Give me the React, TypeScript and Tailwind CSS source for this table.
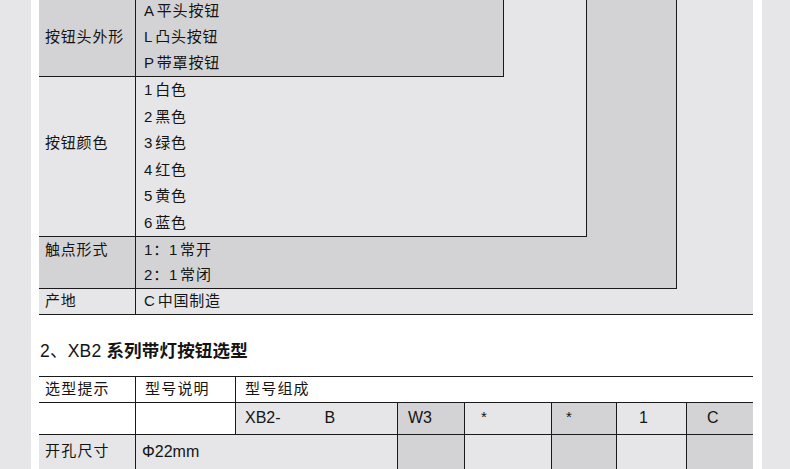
import React from "react";

const FONT = {
  fontFamily:
    '"Liberation Sans", Arial, "Noto Sans CJK SC", sans-serif',
};

type Item = [string, string];

function Line({ item, lh }: { item: Item; lh: string }) {
  return (
    <div className={`${lh} flex items-center`}>
      <span className="mr-[2px]">{item[0]}</span>
      <span>{item[1]}</span>
    </div>
  );
}

function Lines({ items, lh }: { items: Item[]; lh: string }) {
  return (
    <div className="flex flex-col pl-[8px]">
      {items.map((t) => (
        <Line key={t[0] + t[1]} item={t} lh={lh} />
      ))}
    </div>
  );
}

export default function App() {
  return (
    <div
      className="flex h-[469px] w-[790px] overflow-hidden bg-white text-[15px] tracking-[0.8px] text-[#141414]"
      style={FONT}
    >
      <div className="w-[31px] shrink-0 bg-[#e6e6e8]" />
      <div className="w-[8px] shrink-0 bg-white" />
      <div className="w-[714px] shrink-0 flex flex-col">
        {/* Table 1: nested staircase */}
        <div className="-mt-[2px] w-[714px] bg-[#e6e6e8] border-b border-[#1a1a1a]">
          <div className="w-[638px] bg-[#d3d3d5] border-r border-b border-[#1a1a1a]">
            <div className="w-[548px] bg-[#e6e6e8] border-r border-b border-[#1a1a1a]">
              <div className="w-[465px] bg-[#d3d3d5] border-r border-b border-[#1a1a1a]">
                <div className="flex">
                  <div className="w-[97px] shrink-0 border-r border-[#1a1a1a] pl-[6px]">
                    <div className="h-[26px]" />
                    <div className="h-[26px] flex items-center">按钮头外形</div>
                  </div>
                  <Lines
                    lh="h-[26px]"
                    items={[
                      ["A", "平头按钮"],
                      ["L", "凸头按钮"],
                      ["P", "带罩按钮"],
                    ]}
                  />
                </div>
              </div>
              <div className="flex">
                <div className="w-[97px] shrink-0 border-r border-[#1a1a1a] pl-[6px]">
                  <div className="h-[53px]" />
                  <div className="h-[26.5px] flex items-center">按钮颜色</div>
                </div>
                <Lines
                  lh="h-[26.5px]"
                  items={[
                    ["1", "白色"],
                    ["2", "黑色"],
                    ["3", "绿色"],
                    ["4", "红色"],
                    ["5", "黄色"],
                    ["6", "蓝色"],
                  ]}
                />
              </div>
            </div>
            <div className="flex">
              <div className="w-[97px] shrink-0 border-r border-[#1a1a1a] pl-[6px]">
                <div className="h-[25.5px] flex items-center">触点形式</div>
              </div>
              <Lines
                lh="h-[25.5px]"
                items={[
                  ["1：1", "常开"],
                  ["2：1", "常闭"],
                ]}
              />
            </div>
          </div>
          <div className="flex">
            <div className="w-[97px] shrink-0 border-r border-[#1a1a1a] pl-[6px] h-[25px] flex items-center">
              产地
            </div>
            <div className="pl-[8px] h-[25px] flex items-center">
              <span className="mr-[2px]">C</span>
              <span>中国制造</span>
            </div>
          </div>
        </div>

        {/* Heading */}
        <div className="h-[61px] pt-[26px] shrink-0">
          <div className="text-[17.5px] leading-[21px] pl-[1px] tracking-[0.2px]">
            2、XB2 <span className="font-semibold">系列带灯按钮选型</span>
          </div>
        </div>

        {/* Table 2 */}
        <div className="grid grid-cols-[97px_100px_162px_67px_87px_65px_70px_66px] grid-rows-[26px_32px_40px] border-t border-[#1a1a1a] tracking-[1.2px]">
          {/* header row */}
          <div className="border-r border-b border-[#1a1a1a] pl-[6px] flex items-center">选型提示</div>
          <div className="border-r border-b border-[#1a1a1a] pl-[9px] flex items-center">型号说明</div>
          <div className="col-span-6 border-b border-[#1a1a1a] pl-[9px] flex items-center">型号组成</div>

          {/* row 2 */}
          <div className="border-r border-b border-[#1a1a1a] bg-white" />
          <div className="border-r border-b border-[#1a1a1a] bg-white" />
          <div className="border-r border-b border-[#1a1a1a] bg-[#e6e6e8] pl-[9px] flex items-center pb-[2px] text-[16px] tracking-normal">
            <span>XB2-</span>
            <span className="ml-[44px]">B</span>
          </div>
          <div className="border-r border-b border-[#1a1a1a] bg-[#d3d3d5] pl-[10px] flex items-center pb-[2px] text-[16px] tracking-normal">W3</div>
          <div className="border-r border-b border-[#1a1a1a] bg-[#e6e6e8] pl-[16px] flex items-center pb-[2px]">*</div>
          <div className="border-r border-b border-[#1a1a1a] bg-[#d3d3d5] pl-[14px] flex items-center pb-[2px]">*</div>
          <div className="border-r border-b border-[#1a1a1a] bg-[#e6e6e8] pl-[22px] flex items-center pb-[2px] text-[16px]">1</div>
          <div className="border-b border-[#1a1a1a] bg-[#d3d3d5] pl-[20px] flex items-center pb-[2px] text-[16px]">C</div>

          {/* row 3 */}
          <div className="border-r border-[#1a1a1a] bg-[#e6e6e8] pl-[6px] pt-[5px]">开孔尺寸</div>
          <div className="col-span-2 border-r border-[#1a1a1a] bg-[#e6e6e8] pl-[6px] pt-[5px] text-[16px] tracking-normal">Φ22mm</div>
          <div className="border-r border-[#1a1a1a] bg-[#d3d3d5]" />
          <div className="border-r border-[#1a1a1a] bg-[#e6e6e8]" />
          <div className="border-r border-[#1a1a1a] bg-[#d3d3d5]" />
          <div className="border-r border-[#1a1a1a] bg-[#e6e6e8]" />
          <div className="bg-[#d3d3d5]" />
        </div>
      </div>
      <div className="w-[9px] shrink-0 bg-white" />
      <div className="flex-1 bg-[#e6e6e8]" />
    </div>
  );
}
